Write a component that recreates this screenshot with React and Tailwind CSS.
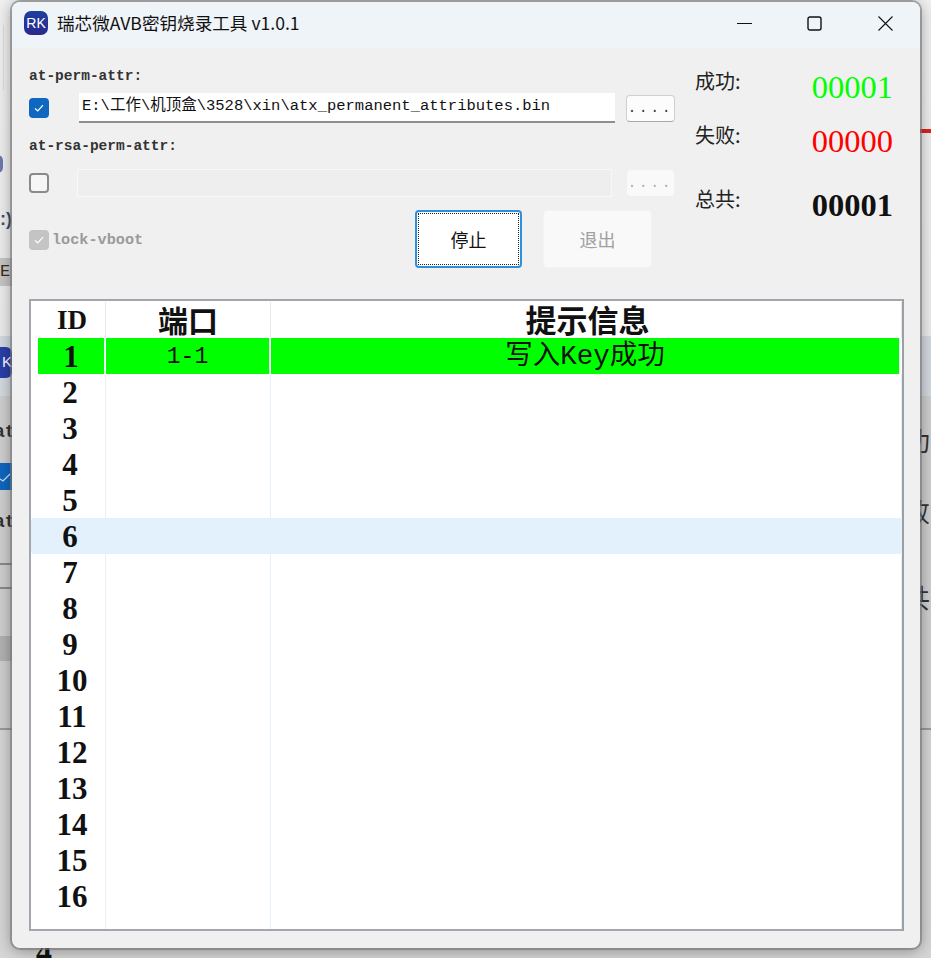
import React from "react";

const labelFont = "font-['Liberation_Mono','Noto_Sans_CJK_SC',monospace]";
const rows = Array.from({ length: 16 }, (_, i) => i + 1);

const Check = ({ checked, disabled }) => (
  <span
    className={`flex h-5 w-5 shrink-0 items-center justify-center rounded-[4px] ${
      disabled
        ? "bg-[#c4c4c4]"
        : checked
          ? "bg-[#0f67c0]"
          : "border-2 border-[#8a8a8a] bg-[#f6f6f6]"
    }`}
  >
    {(checked || disabled) && (
      <svg viewBox="0 0 12 12" className="h-3 w-3" fill="none" stroke="white" strokeWidth="1.2">
        <path d="M2 6.5 L4.8 9 L10 3.2" />
      </svg>
    )}
  </span>
);

const Stat = ({ label, value, color, className }) => (
  <div className={`flex items-center justify-between ${className}`}>
    <span className="mb-[12px] text-[20px] leading-6 text-[#222] font-['Noto_Sans_CJK_SC',sans-serif]">{label}</span>
    <span className={`text-[32.5px] leading-9 font-['Liberation_Serif',serif] ${color}`}>{value}</span>
  </div>
);

// the other copy of the tool that shows at both sides of the window
const BehindWindow = () => (
  <>
    <div className="absolute left-[3px] top-[25px] h-[65px] w-px bg-[#dddddd]" />
    <div className="absolute left-[-8px] top-[155px] h-[18px] w-[11px] rounded-full bg-[#6b78b0]" />
    <div className="absolute left-0 top-[206px] text-[18px] font-bold text-[#35506e] font-['Liberation_Sans',sans-serif]">:)</div>
    <div className="absolute left-0 top-[258px] flex h-[28px] w-[12px] items-center overflow-hidden bg-[#c6c6c6] text-[17px] text-[#3a2a1a] font-['Liberation_Mono',monospace]">
      E
    </div>
    <div className="absolute left-0 top-[336px] h-[394px] w-full border-b-2 border-[#9a9a9a] bg-[#cfcfcf]" />
    <div className="absolute left-0 top-[730px] h-[228px] w-full bg-[#d6d6d6]" />
    <div className="absolute left-0 top-[336px] h-[60px] w-full bg-[#d4dae1]" />
    <div className="absolute left-[-12px] top-[347px] flex h-[31px] w-[24px] items-center justify-end rounded-md bg-[#2b3fa8] text-[15px] text-white font-['Liberation_Sans',sans-serif]">
      K
    </div>
    <div className="absolute left-[-6px] top-[419px] text-[18px] font-bold text-[#333] font-['Liberation_Mono',monospace]">at</div>
    <div className="absolute left-0 top-[463px] flex h-[27px] w-[12px] items-center bg-[#0f67c0]">
      <svg viewBox="0 0 12 12" className="h-3 w-3" fill="none" stroke="#cfe2f5" strokeWidth="1.3">
        <path d="M0 8 L3 10 L10 3" />
      </svg>
    </div>
    <div className="absolute left-[-6px] top-[509px] text-[18px] font-bold text-[#333] font-['Liberation_Mono',monospace]">at</div>
    <div className="absolute left-0 top-[563px] h-[2px] w-[12px] bg-[#8a8a8a]" />
    <div className="absolute left-0 top-[587px] h-[2px] w-[12px] bg-[#8a8a8a]" />
    <div className="absolute left-0 top-[636px] h-[25px] w-[12px] bg-[#b2b2b2]" />
    <div className="absolute right-0 top-[129px] h-[4px] w-[11px] bg-[#e02020]" />
    <div className="absolute left-[904px] top-[426px] text-[26px] leading-7 text-[#333] font-['Noto_Sans_CJK_SC',sans-serif]">功</div>
    <div className="absolute left-[904px] top-[497px] text-[26px] leading-7 text-[#333] font-['Noto_Sans_CJK_SC',sans-serif]">败</div>
    <div className="absolute left-[904px] top-[583px] text-[26px] leading-7 text-[#333] font-['Noto_Sans_CJK_SC',sans-serif]">共</div>
    <div className="absolute left-[36px] top-[933px] text-[32px] font-bold leading-9 text-[#111] font-['Liberation_Serif',serif]">4</div>
  </>
);

const App = () => {
  return (
    <div className="relative h-[958px] w-[931px] overflow-hidden bg-gradient-to-b from-[#f0f0f0] to-[#e6e6e6]">
      <BehindWindow />

      <div className="absolute left-[12px] top-[2px] flex h-[946px] w-[908px] flex-col overflow-hidden rounded-lg bg-[#f0f0f0] shadow-[0_0_0_2px_rgba(120,120,120,0.6),0_2px_16px_rgba(0,0,0,0.4)]">
        <div className="flex h-[46px] shrink-0 items-center bg-[#eff4f9] pb-[4px] pl-[12px]">
          <span className="flex h-6 w-6 items-center justify-center rounded-[7px] bg-gradient-to-b from-[#1c3f9e] to-[#2a2a8c] text-[14px] text-white font-['Liberation_Sans',sans-serif]">
            RK
          </span>
          <span className="ml-[9px] text-[17.6px] text-[#111] font-['Noto_Sans_CJK_SC',sans-serif]">
            瑞芯微AVB密钥烧录工具 v1.0.1
          </span>
          <div className="ml-auto flex h-full items-center">
            <svg viewBox="0 0 15 15" className="mr-[55px] h-[15px] w-[15px]" fill="none" stroke="#111" strokeWidth="1">
              <path d="M0 7.5 H15" />
            </svg>
            <svg viewBox="0 0 15 15" className="mr-[56px] h-[15px] w-[15px]" fill="none" stroke="#111" strokeWidth="1.4">
              <rect x="1" y="1" width="13" height="13" rx="2" />
            </svg>
            <svg viewBox="0 0 15 15" className="mr-[27px] h-[15px] w-[15px]" fill="none" stroke="#111" strokeWidth="1.1">
              <path d="M0.5 0.5 L14.5 14.5 M14.5 0.5 L0.5 14.5" />
            </svg>
          </div>
        </div>

        <div className="flex h-[251px] shrink-0 pl-[17px]">
          <div className="w-[646px] shrink-0">
            <div className={`mt-[18px] h-5 text-[14.5px] font-bold leading-5 text-[#333] ${labelFont}`}>at-perm-attr:</div>
            <div className="mt-[7px] flex h-[30px] items-center">
              <Check checked />
              <div className={`ml-[30px] flex h-[30px] w-[536px] items-center border-b-2 border-[#8f8f8f] bg-white pl-[3px] text-[15.5px] text-[#111] ${labelFont}`}>
                E:\工作\机顶盒\3528\xin\atx_permanent_attributes.bin
              </div>
              <div className="ml-[11px] flex h-[27px] w-[49px] items-center justify-center rounded border border-[#cfcfcf] border-b-[#a9a9a9] bg-[#fcfcfc] text-[14px] tracking-[3px] text-[#333] font-['Liberation_Mono',monospace]">
                ....
              </div>
            </div>
            <div className={`mt-[13px] h-5 text-[14.5px] font-bold leading-5 text-[#333] ${labelFont}`}>at-rsa-perm-attr:</div>
            <div className="mt-[13px] flex h-[28px] items-center">
              <Check />
              <div className="ml-[28px] h-[28px] w-[535px] border border-[#f8f8f8] bg-[#eeeeee]" />
              <div className="ml-[15px] flex h-[26px] w-[47px] items-center justify-center rounded bg-[#f9f9f9] text-[14px] tracking-[3px] text-[#aaa] font-['Liberation_Mono',monospace]">
                ....
              </div>
            </div>
            <div className="mt-[13px] flex items-start">
              <div className="mt-[19px] flex w-[113px] shrink-0 items-center">
                <Check disabled />
                <span className={`ml-[3px] whitespace-nowrap text-[15.2px] font-bold text-[#9a9a9a] ${labelFont}`}>lock-vboot</span>
              </div>
              <div className="ml-[273px] flex h-[58px] w-[107px] items-center justify-center rounded-[4px] border-2 border-[#2e8fdc] bg-white p-px font-['Noto_Sans_CJK_SC',sans-serif] text-[18px] text-[#111]">
                <span className="flex h-full w-full items-center justify-center border border-dotted border-[#222]">停止</span>
              </div>
              <div className="ml-[21px] flex h-[58px] w-[109px] items-center justify-center rounded-[4px] border border-[#f3f3f3] bg-[#f9f9f9] font-['Noto_Sans_CJK_SC',sans-serif] text-[18px] text-[#a0a0a0]">
                退出
              </div>
            </div>
          </div>
          <div className="ml-[20px] w-[198px]">
            <Stat label="成功:" value="00001" color="text-[#00ff00]" className="mt-[21px]" />
            <Stat label="失败:" value="00000" color="text-[#ff0000]" className="mt-[18px]" />
            <Stat label="总共:" value="00001" color="font-bold text-[#111]" className="mt-[28px]" />
          </div>
        </div>

        <div className="ml-[17px] h-[632px] w-[875px] shrink-0 border-2 border-[#a3a7ad] border-r-[#9aa0a6] bg-white pt-px font-['Liberation_Serif','Noto_Sans_CJK_SC',serif] text-[#111]">
          <div className="grid h-9 grid-cols-[75px_165px_631px] overflow-hidden text-[30px] font-bold leading-9">
            <div className="border-r border-[#e6e6e6] pl-[8px] text-center text-[27px]">ID</div>
            <div className="border-r border-[#e6e6e6] pt-[2px] text-center">端口</div>
            <div className="border-r border-[#e6e6e6] pl-[3px] pt-[2px] text-center text-[31px]">提示信息</div>
          </div>
          {rows.map((n) => (
            <div
              key={n}
              className={`grid h-9 grid-cols-[75px_165px_631px] overflow-hidden text-[31px] font-bold leading-[38px] ${
                n === 6 ? "rounded-[3px] bg-[#e3f1fd]" : ""
              }`}
            >
              <div
                className={`border-r border-[#e6f0fb] text-center ${
                  n === 1 ? "ml-[7px] mr-px bg-[#00ff00]" : n >= 10 ? "pl-[8px]" : "pl-[4px]"
                }`}
              >
                {n}
              </div>
              <div className={`border-r border-[#e6f0fb] text-center ${n === 1 ? `mr-px bg-[#00ff00] text-[23px] font-normal ${labelFont}` : ""}`}>
                {n === 1 ? "1-1" : ""}
              </div>
              <div className={`border-r border-[#e6f0fb] text-center ${n === 1 ? `mr-[2px] bg-[#00ff00] text-[27.5px] font-normal ${labelFont}` : ""}`}>
                {n === 1 ? "写入Key成功" : ""}
              </div>
            </div>
          ))}
          <div className="grid h-[15px] grid-cols-[75px_165px_631px]">
            <div className="border-r border-[#e6f0fb]" />
            <div className="border-r border-[#e6f0fb]" />
            <div className="border-r border-[#e6f0fb]" />
          </div>
        </div>
      </div>
    </div>
  );
};

export default App;
